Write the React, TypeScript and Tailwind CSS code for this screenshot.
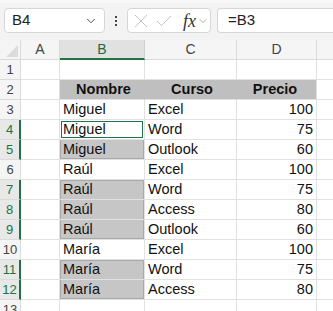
import React from "react";
import { ChevronDown } from "lucide-react";

type Row = { n: number; b?: string; c?: string; d?: string; head?: boolean };

const rows: Row[] = [
  { n: 1 },
  { n: 2, b: "Nombre", c: "Curso", d: "Precio", head: true },
  { n: 3, b: "Miguel", c: "Excel", d: "100" },
  { n: 4, b: "Miguel", c: "Word", d: "75" },
  { n: 5, b: "Miguel", c: "Outlook", d: "60" },
  { n: 6, b: "Raúl", c: "Excel", d: "100" },
  { n: 7, b: "Raúl", c: "Word", d: "75" },
  { n: 8, b: "Raúl", c: "Access", d: "80" },
  { n: 9, b: "Raúl", c: "Outlook", d: "60" },
  { n: 10, b: "María", c: "Excel", d: "100" },
  { n: 11, b: "María", c: "Word", d: "75" },
  { n: 12, b: "María", c: "Access", d: "80" },
  { n: 13 },
];

const selectedRows = [4, 5, 7, 8, 9, 11, 12];

// selection look for column B, per row
const bStyle: Record<number, string> = {
  4: "bg-white shadow-[inset_0_0_0_1px_#ffffff,inset_0_0_0_2px_#217346]",
  5: "bg-[#c6c6c6] shadow-[inset_1px_0_0_#a8a8a8,inset_-1px_-1px_0_#a8a8a8]",
  7: "bg-[#c6c6c6] shadow-[inset_1px_1px_0_#a8a8a8,inset_-1px_0_0_#a8a8a8]",
  8: "bg-[#c6c6c6] shadow-[inset_1px_0_0_#a8a8a8,inset_-1px_0_0_#a8a8a8]",
  9: "bg-[#c6c6c6] shadow-[inset_1px_0_0_#a8a8a8,inset_-1px_-1px_0_#a8a8a8]",
  11: "bg-[#c6c6c6] shadow-[inset_1px_1px_0_#a8a8a8,inset_-1px_0_0_#a8a8a8]",
  12: "bg-[#c6c6c6] shadow-[inset_1px_0_0_#a8a8a8,inset_-1px_-1px_0_#a8a8a8]",
};

const cell = "h-[20px] border-r border-b border-[#e1e1e1] flex items-center shrink-0 overflow-hidden";

export default function App() {
  return (
    <div className="w-[333px] h-[311px] overflow-hidden bg-white text-[#111] font-['Liberation_Sans',Arial,sans-serif]">
      {/* formula bar */}
      <div className="h-[40px] bg-[#f3f3f3] border-t-[3px] border-[#f8f8f8] flex items-start pt-[5px]">
        <div className="ml-[4px] w-[101px] h-[25px] bg-white border border-[#d6d6d6] rounded-[4px] flex items-center justify-between pl-[7px] pr-[6px]">
          <span className="text-[15px] text-[#222]">B4</span>
          <ChevronDown size={14} strokeWidth={1.6} className="text-[#444]" />
        </div>
        <div className="w-[22px] h-[25px] flex flex-col items-center justify-center gap-[2px]">
          <span className="w-[2px] h-[2px] bg-[#444]" />
          <span className="w-[2px] h-[2px] bg-[#444]" />
          <span className="w-[2px] h-[2px] bg-[#444]" />
        </div>
        <div className="w-[84px] h-[25px] bg-white border border-[#d6d6d6] rounded-[4px] flex items-center pl-[6px]">
          <svg width="14" height="14" viewBox="0 0 14 14" fill="none" stroke="#c4c4c4" strokeWidth="1">
            <path d="M1 1L13 13M13 1L1 13" />
          </svg>
          <svg width="16" height="12" viewBox="0 0 16 12" fill="none" stroke="#c4c4c4" strokeWidth="1" className="ml-[8px]">
            <path d="M1 6L5.5 10.5L15 1" />
          </svg>
          <span className="ml-[11px] text-[18px] italic text-[#333] font-['Liberation_Serif',serif] leading-none">fx</span>
          <ChevronDown size={12} strokeWidth={1.4} className="text-[#888] ml-[1px]" />
        </div>
        <div className="ml-[6px] flex-1 h-[25px] bg-white border border-[#d6d6d6] rounded-l-[4px] border-r-0 flex items-center pl-[10px]">
          <span className="text-[15px] text-[#222]">=B3</span>
        </div>
      </div>

      {/* column headers */}
      <div className="flex h-[20px] bg-[#f5f5f5] text-[14px] text-[#444]">
        <div className="w-[21px] h-[20px] border-r border-b border-[#dadada] flex items-end justify-end p-[2px] shrink-0">
          <svg width="12" height="12" viewBox="0 0 12 12">
            <polygon points="12,0 12,12 0,12" fill="#dcdcdc" />
          </svg>
        </div>
        <div className="w-[39px] h-[20px] border-r border-b border-[#dadada] flex items-center justify-center shrink-0">A</div>
        <div className="w-[85px] h-[20px] bg-[#e1e1e1] border-r border-[#d0d0d0] border-b-2 border-b-[#217346] flex items-center justify-center shrink-0 text-[#1e6b40]">B</div>
        <div className="w-[92px] h-[20px] border-r border-b border-[#dadada] flex items-center justify-center shrink-0">C</div>
        <div className="w-[80px] h-[20px] border-r border-b border-[#dadada] flex items-center justify-center shrink-0">D</div>
        <div className="flex-1 h-[20px] border-b border-[#dadada]" />
      </div>

      {/* grid */}
      <div className="text-[14.5px]">
        {rows.map((r) => {
          const sel = selectedRows.includes(r.n);
          return (
            <div key={r.n} className="flex">
              <div
                className={
                  sel
                    ? "w-[21px] h-[20px] bg-[#e8e8e8] border-r-2 border-r-[#217346] border-b border-b-[#dadada] flex items-center justify-center shrink-0 text-[13px] text-[#217346]"
                    : "w-[21px] h-[20px] bg-[#f5f5f5] border-r border-b border-[#dadada] flex items-center justify-center shrink-0 text-[13px] text-[#444]"
                }
              >
                {r.n}
              </div>
              <div className={`${cell} w-[39px]`} />
              <div
                className={`${cell} w-[85px] pl-[3px] ${
                  r.head ? "bg-[#bfbfbf] border-r-[#bfbfbf] justify-center font-bold" : bStyle[r.n] ?? ""
                }`}
              >
                {r.b}
              </div>
              <div
                className={`${cell} w-[92px] pl-[3px] ${
                  r.head ? "bg-[#bfbfbf] border-r-[#bfbfbf] justify-center font-bold" : ""
                }`}
              >
                {r.c}
              </div>
              <div
                className={`${cell} w-[80px] pr-[3px] ${
                  r.head ? "bg-[#bfbfbf] justify-center font-bold" : "justify-end"
                }`}
              >
                {r.d}
              </div>
              <div className="h-[20px] flex-1 border-b border-[#e1e1e1]" />
            </div>
          );
        })}
      </div>
    </div>
  );
}
